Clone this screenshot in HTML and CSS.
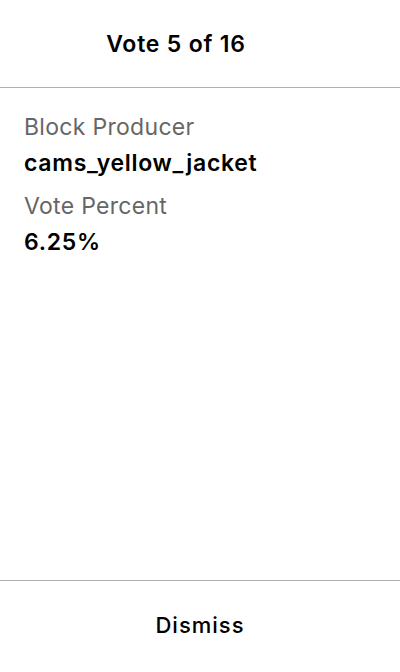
FILE: index.html
```html
<!DOCTYPE html>
<html>
<head>
<meta charset="utf-8">
<link rel="stylesheet" href="styles.css">
</head>
<body>
<div class="screen">
  <header class="header"><h1 class="title">Vote 5 of 16</h1></header>
  <main class="content">
    <div class="label">Block Producer</div>
    <div class="value">cams_yellow_jacket</div>
    <div class="label">Vote Percent</div>
    <div class="value">6.25%</div>
  </main>
  <footer class="footer"><button class="dismiss">Dismiss</button></footer>
</div>
</body>
</html>
```
FILE: styles.css
```css
html, body { margin: 0; padding: 0; background: #fff; }
body { font-family: Inter, "Noto Sans", sans-serif; color: #000; }
.screen { width: 400px; height: 672px; display: flex; flex-direction: column; }
.header { height: 87px; padding-right: 48px; border-bottom: 1px solid #b0b0b0; display: flex; align-items: center; justify-content: center; }
.title { margin: 0; font-size: 23px; font-weight: 600; letter-spacing: 0.8px; line-height: 28px; }
.content { flex: 1; padding: 21px 24px 0; }
.label { font-size: 23px; color: #666; line-height: 36px; letter-spacing: 0.3px; }
.value { font-size: 23px; font-weight: 600; line-height: 36px; letter-spacing: 0.7px; margin-bottom: 7px; }
.footer { height: 87px; padding-bottom: 4px; border-top: 1px solid #b0b0b0; display: flex; align-items: center; justify-content: center; }
.dismiss { background: none; border: none; font-family: inherit; font-size: 22px; font-weight: 500; color: #000; padding: 0; letter-spacing: 1px; line-height: 28px; }
```
